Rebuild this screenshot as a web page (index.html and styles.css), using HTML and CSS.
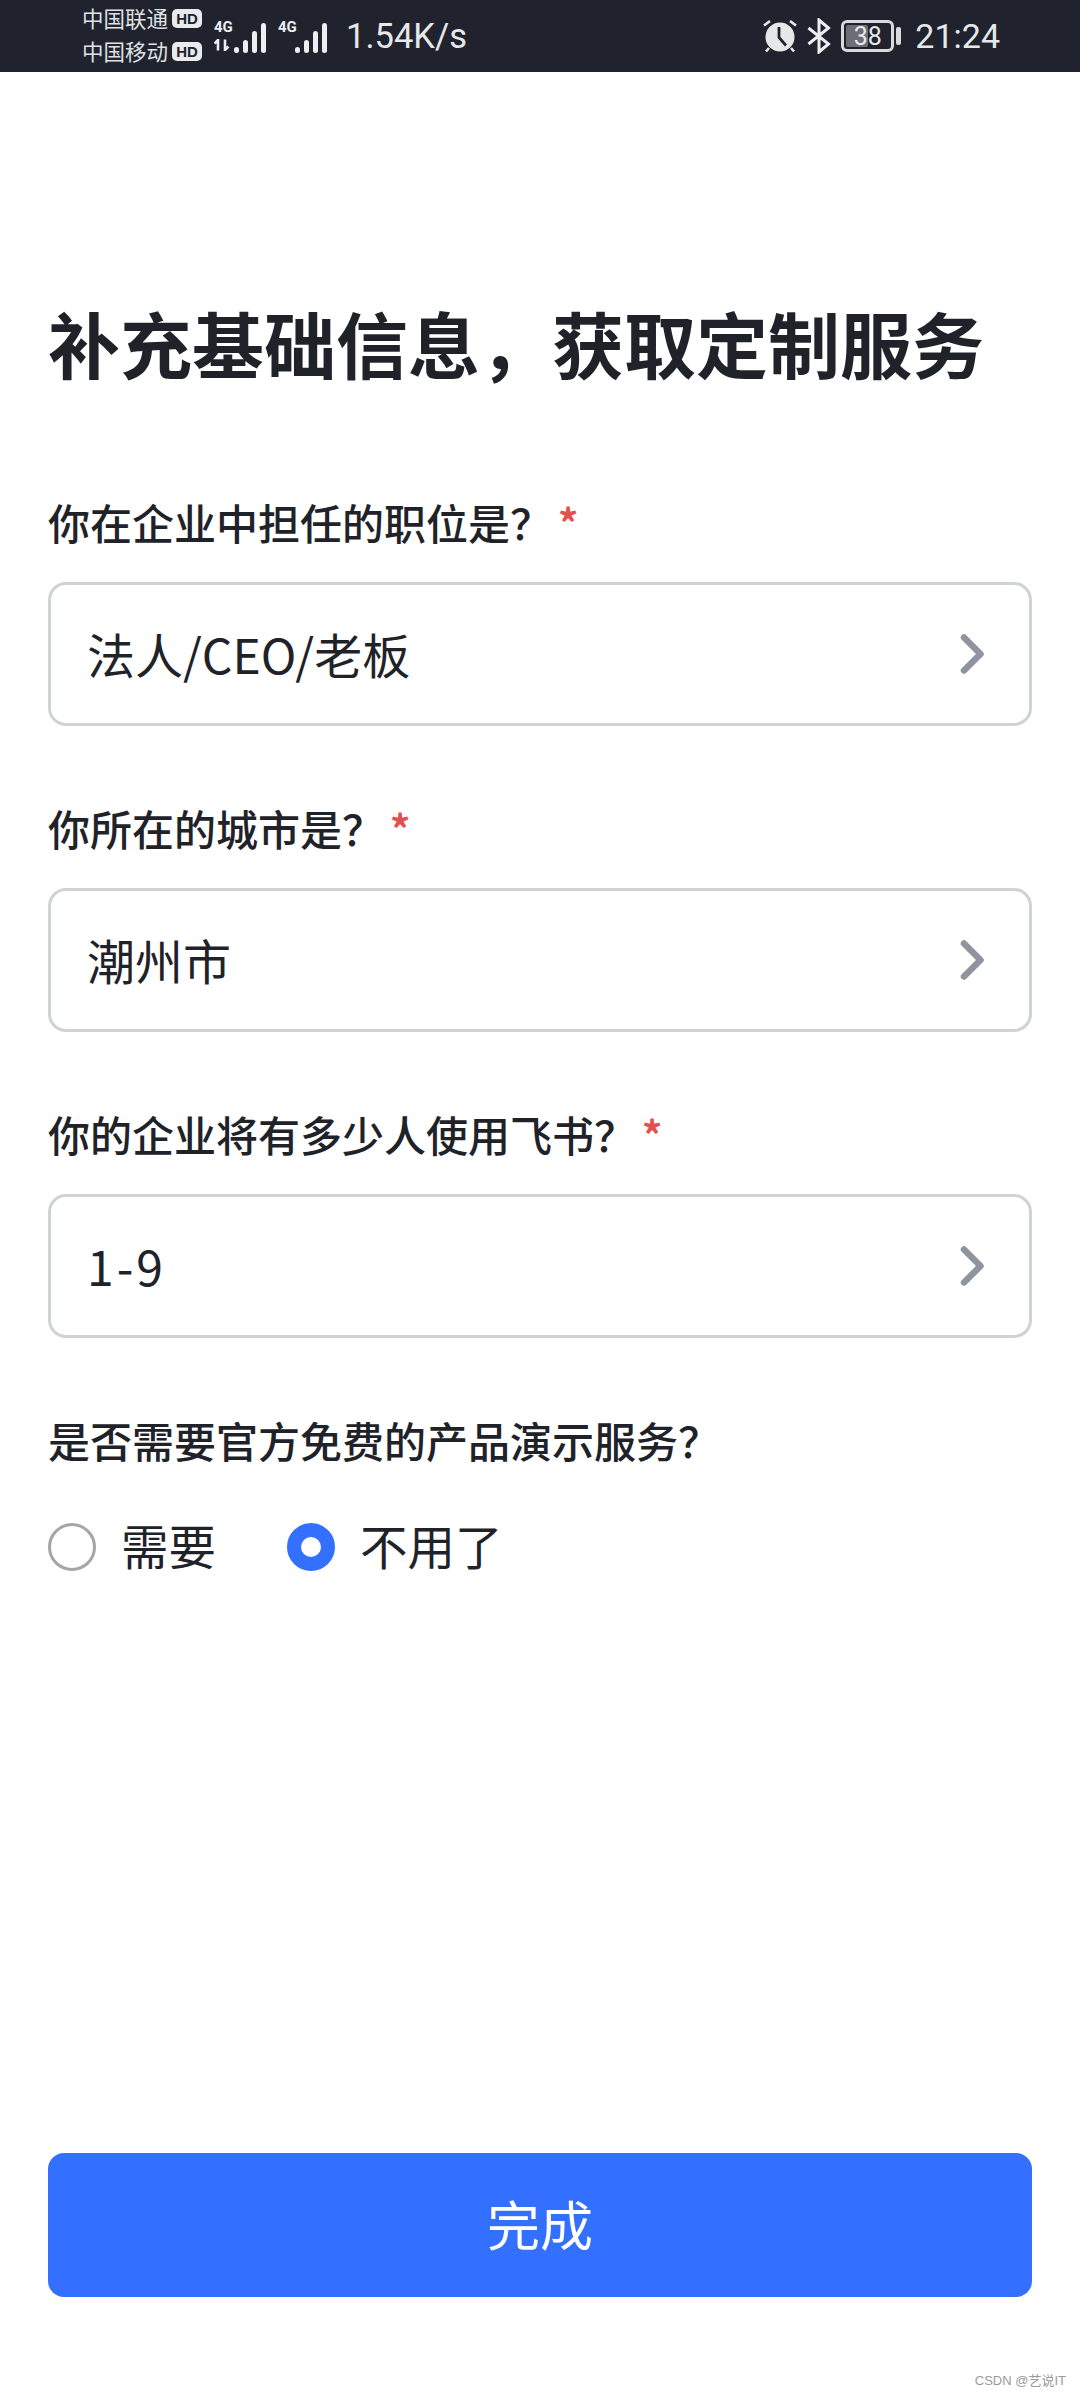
FILE: index.html
```html
<!DOCTYPE html>
<html lang="zh-CN">
<head>
<meta charset="utf-8">
<title>补充基础信息</title>
<link rel="stylesheet" href="styles.css">
</head>
<body>
<div class="page">
  <header class="status">
    <div class="carriers">
      <div class="carrier"><span>中国联通</span><b class="hd">HD</b></div>
      <div class="carrier"><span>中国移动</span><b class="hd">HD</b></div>
    </div>
    <div class="net net-first">
      <div class="net-type"><span>4G</span>
        <svg class="arrows" width="17" height="12" viewBox="0 0 17 12"><path d="M4 11.500V1L0.500 4.500M11 0.500V11l3.500-3.500" fill="none" stroke="#eceef0" stroke-width="2.600"/></svg>
      </div>
      <svg class="bars" width="32" height="32" viewBox="0 0 32 32"><g fill="#eceef0"><rect x="0" y="25" width="5" height="6" rx="2.500"/><rect x="9" y="18" width="5" height="13" rx="2.500"/><rect x="18" y="9" width="5" height="22" rx="2.500"/><rect x="27" y="1" width="5" height="30" rx="2.500"/></g></svg>
    </div>
    <div class="net net-second">
      <div class="net-type solo"><span>4G</span></div>
      <svg class="bars" width="32" height="32" viewBox="0 0 32 32"><g fill="#eceef0"><rect x="0" y="25" width="5" height="6" rx="2.500"/><rect x="9" y="18" width="5" height="13" rx="2.500"/><rect x="18" y="9" width="5" height="22" rx="2.500"/><rect x="27" y="1" width="5" height="30" rx="2.500"/></g></svg>
    </div>
    <div class="speed">1.54K/s</div>
    <div class="spacer"></div>
    <svg class="alarm" width="34" height="34" viewBox="0 0 34 34"><circle cx="17" cy="18" r="14.500" fill="#e6e8e8"/><path d="M16 8v10.500l7 8" fill="none" stroke="#20232d" stroke-width="2.800"/><path d="M1 6.500l6-4.500M33 6.500l-6-4.500M6 29l-3 3.500M28 29l3 3.500" stroke="#e6e8e8" stroke-width="2.600" fill="none"/></svg>
    <svg class="bt" width="24" height="36" viewBox="0 0 24 36"><path d="M1.500 10l20 16-9.500 8V2l9.500 8-20 16" fill="none" stroke="#eceef0" stroke-width="3"/></svg>
    <div class="battery"><div class="cell"><div class="level"></div><span class="pct">38</span></div><i class="tip"></i></div>
    <div class="time">21:24</div>
  </header>

  <main class="form">
    <h1 class="title">补充基础信息，获取定制服务</h1>

    <section class="field">
      <div class="label">你在企业中担任的职位是？<em class="req">*</em></div>
      <div class="select"><span>法人/CEO/老板</span>
        <svg class="chev" width="28" height="44" viewBox="0 0 28 44"><path d="M5 5.500l16.500 16.500L5 38.500" fill="none" stroke="#8f959e" stroke-width="6.500" stroke-linecap="round" stroke-linejoin="round"/></svg>
      </div>
    </section>

    <section class="field">
      <div class="label">你所在的城市是？<em class="req">*</em></div>
      <div class="select"><span>潮州市</span>
        <svg class="chev" width="28" height="44" viewBox="0 0 28 44"><path d="M5 5.500l16.500 16.500L5 38.500" fill="none" stroke="#8f959e" stroke-width="6.500" stroke-linecap="round" stroke-linejoin="round"/></svg>
      </div>
    </section>

    <section class="field">
      <div class="label">你的企业将有多少人使用飞书？<em class="req">*</em></div>
      <div class="select"><span class="range">1-9</span>
        <svg class="chev" width="28" height="44" viewBox="0 0 28 44"><path d="M5 5.500l16.500 16.500L5 38.500" fill="none" stroke="#8f959e" stroke-width="6.500" stroke-linecap="round" stroke-linejoin="round"/></svg>
      </div>
    </section>

    <section class="field">
      <div class="label">是否需要官方免费的产品演示服务？</div>
      <div class="radios">
        <div class="radio"><i class="dot"></i><span class="radio-text">需要</span></div>
        <div class="radio"><i class="dot on"></i><span class="radio-text">不用了</span></div>
      </div>
    </section>

    <button class="submit" type="button">完成</button>
  </main>
  <div class="mark">CSDN @艺说IT</div>
</div>
</body>
</html>
```
FILE: styles.css
```css
* { box-sizing: border-box; }
html, body { margin: 0; padding: 0; background: #fff; }
body { font-family: "Noto Sans CJK SC", "Noto Sans", sans-serif; color: #1f2329; }
.page { position: relative; width: 1080px; height: 2400px; display: flex; flex-direction: column; overflow: hidden; }

.status { height: 72px; flex: none; background: #20232d; color: #eceef0; display: flex; align-items: center; padding-left: 82px; }
.carriers { display: flex; flex-direction: column; gap: 3px; width: 122px; margin-top: -3px; }
.carrier { display: flex; align-items: center; gap: 4px; font-size: 21.500px; line-height: 30px; white-space: nowrap; color: #dfe1e4; }
.hd { font: 700 15px/19px "Liberation Sans", sans-serif; background: #e8eaec; color: #20232d; border-radius: 5px; width: 30px; height: 19px; text-align: center; }
.net { display: flex; align-items: flex-end; }
.net-first { margin-left: 10px; }
.net-second { margin-left: 12px; }
.net-type { display: flex; flex-direction: column; align-items: flex-start; font: 700 15px/18px "Roboto", sans-serif; width: 20px; height: 36px; }
.net-type.solo { width: 17px; }
.arrows { margin-top: 3px; }
.speed { font: 400 34.500px/1 "Roboto", sans-serif; margin-left: 19px; color: #e6e8ea; }
.spacer { flex: 1; }
.alarm { margin-right: 10px; }
.bt { margin-right: 10px; }
.battery { display: flex; align-items: center; gap: 2px; margin-right: 14px; }
.cell { position: relative; width: 53px; height: 32px; border: 3px solid #d8dadc; border-radius: 6px; display: flex; align-items: center; justify-content: center; }
.level { position: absolute; left: 2px; top: 2px; bottom: 2px; width: 22px; background: #6c6e74; border-radius: 2px; }
.pct { position: relative; font: 400 25px/1 "Roboto", sans-serif; color: #e6e8ea; }
.tip { display: block; width: 5px; height: 18px; background: #d8dadc; border-radius: 2px; }
.time { font: 400 34px/1 "Roboto", sans-serif; color: #e6e8ea; margin-right: 80px; }

.form { flex: 1; display: flex; flex-direction: column; padding: 0 48px; }
.title { margin: 222px 0 0; font-size: 72px; line-height: 96px; font-weight: 700; white-space: nowrap; color: #1f2329; }
.title + .field { margin-top: 102px; }
.field + .field { margin-top: 72px; }
.label { font-size: 42px; line-height: 60px; font-weight: 500; display: flex; align-items: center; white-space: nowrap; }
.req { font-style: normal; font-size: 40px; font-weight: 700; color: #e0524f; margin-left: 6px; line-height: 60px; }
.select { margin-top: 30px; height: 144px; border: 3px solid #d0d3d6; border-radius: 18px; display: flex; align-items: center; justify-content: space-between; padding: 0 42px 3px 36px; font-size: 48px; }
.chev { margin-bottom: -3px; }
.range { letter-spacing: 3px; }
.radios { display: flex; align-items: center; gap: 71px; margin-top: 49px; }
.radio { display: flex; align-items: center; gap: 25px; font-size: 47.500px; line-height: 60px; }
.radio-text { margin-top: -4px; }
.dot { display: block; width: 48px; height: 48px; border-radius: 50%; border: 3px solid #a3a5a8; background: #fff; }
.dot.on { border: 14px solid #3370ff; }
.submit { margin-top: auto; margin-bottom: 103px; height: 144px; padding: 0 0 5px; border: 0; border-radius: 16px; background: #3370ff; color: #fff; font: inherit; font-size: 53px; }
.mark { position: absolute; right: 14px; bottom: 10px; font: 13px/18px "Liberation Sans", "Noto Sans CJK SC", sans-serif; color: #9a9a9a; }
```
